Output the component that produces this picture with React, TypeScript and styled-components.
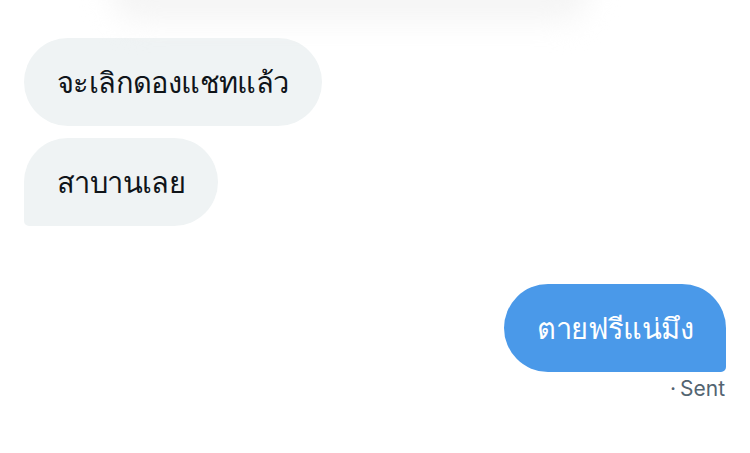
import styled, { createGlobalStyle } from 'styled-components'

const GlobalStyle = createGlobalStyle`
  html, body {
    margin: 0;
    padding: 0;
    background: #fff;
  }
  body {
    font-family: "Noto Sans", "Liberation Sans", sans-serif;
    color: #0f1419;
  }
`

const Page = styled.main`
  position: relative;
  width: 750px;
  height: 453px;
  overflow: hidden;
  background: #fff;
`

const TopFade = styled.div`
  position: absolute;
  left: 110px;
  top: -40px;
  width: 480px;
  height: 62px;
  border-radius: 40px;
  background: #f5f5f5;
  filter: blur(14px);
`

const Thread = styled.div`
  display: flex;
  flex-direction: column;
  padding: 38px 24px 0;
`

const Group = styled.div<{ $mine?: boolean }>`
  display: flex;
  flex-direction: column;
  align-items: ${(p) => (p.$mine ? 'flex-end' : 'flex-start')};
  gap: 12px;
  & + & {
    margin-top: 58px;
  }
`

const Bubble = styled.div<{ $mine?: boolean; $tail?: boolean }>`
  box-sizing: border-box;
  height: 88px;
  display: flex;
  align-items: center;
  padding: 0 33px;
  font-size: 29px;
  letter-spacing: -0.6px;
  line-height: 40px;
  border-radius: 44px;
  background: ${(p) => (p.$mine ? '#4a99e9' : '#eff3f4')};
  color: ${(p) => (p.$mine ? '#fff' : '#0f1419')};
  ${(p) =>
    p.$tail
      ? p.$mine
        ? 'border-bottom-right-radius: 5px;'
        : 'border-bottom-left-radius: 5px;'
      : ''}
`

const Meta = styled.div`
  margin-top: -9px;
  padding-right: 1px;
  font-family: "Inter", "Liberation Sans", sans-serif;
  font-size: 21px;
  line-height: 28px;
  word-spacing: -2px;
  color: #536471;
`

export default function App() {
  return (
    <Page>
      <GlobalStyle />
      <TopFade />
      <Thread>
        <Group>
          <Bubble>จะเลิกดองแชทแล้ว</Bubble>
          <Bubble $tail>สาบานเลย</Bubble>
        </Group>
        <Group $mine>
          <Bubble $mine $tail>
            ตายฟรีแน่มึง
          </Bubble>
          <Meta>· Sent</Meta>
        </Group>
      </Thread>
    </Page>
  )
}
